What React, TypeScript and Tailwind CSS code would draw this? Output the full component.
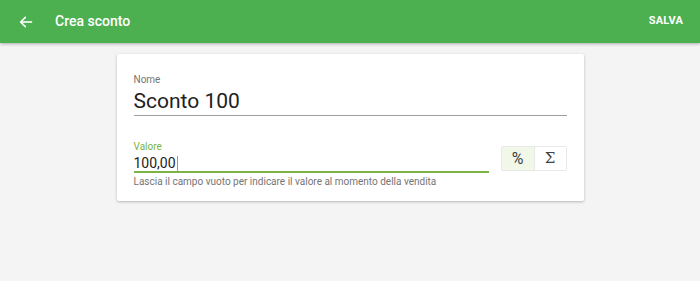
import React from "react";

export default function App() {
  return (
    <div className="w-[700px] h-[281px] bg-[#f4f4f4] flex flex-col" style={{ fontFamily: "Roboto, 'Noto Sans', sans-serif" }}>
      <header className="h-[43px] bg-[#4caf50] flex items-center shadow-[0_1px_3px_rgba(0,0,0,0.3)] relative z-10 shrink-0">
        <div className="w-[50px] flex items-center justify-center pl-[2px]">
          <svg width="16" height="16" viewBox="0 0 24 24" fill="none" stroke="white" strokeWidth="2.4" strokeLinecap="square">
            <path d="M20 12H5" />
            <path d="M11 5l-7 7 7 7" strokeLinecap="round" strokeLinejoin="round" />
          </svg>
        </div>
        <div className="text-white text-[14px] font-medium ml-[5px] flex-1">Crea sconto</div>
        <div className="text-white text-[11px] font-bold tracking-[0.2px] mr-[17px]">SALVA</div>
      </header>
      <main className="flex justify-center pt-[11px]">
        <div className="w-[467px] bg-white shadow-[0_1px_3px_rgba(0,0,0,0.25)] rounded-[2px] px-[17px] pt-[20px] pb-[13px]">
          <div className="text-[10px] text-[#757575] leading-[12px]">Nome</div>
          <div className="mt-[2px] h-[28px] border-b border-[#9e9e9e] flex items-center text-[21px] text-[#212121] leading-none pb-[1px]">Sconto 100</div>
          <div className="flex items-start mt-[25px]">
            <div className="flex-1">
              <div className="text-[10px] text-[#7cb342] leading-[12px]">Valore</div>
              <div className="h-[20px] border-b-[2px] border-[#7cb342] flex items-center text-[14px] text-[#212121] pt-[3px] mr-[0px]">
                100,00<span className="inline-block w-[1px] h-[15px] bg-[#7cb342] ml-[1px]" />
              </div>
              <div className="text-[10px] text-[#757575] mt-[3px] leading-[12px]">Lascia il campo vuoto per indicare il valore al momento della vendita</div>
            </div>
            <div className="ml-[12px] mt-[5px] flex border border-[#e8e8e8] rounded-[2px]">
              <div className="w-[33px] h-[23px] bg-[#f1f8e9] flex items-center justify-center text-[16px] text-[#424242] border-r border-[#e8e8e8]">%</div>
              <div className="w-[31px] h-[23px] bg-white flex items-center justify-center text-[15px] text-[#424242]" style={{ fontFamily: "'DejaVu Serif', serif" }}>Σ</div>
            </div>
          </div>
        </div>
      </main>
    </div>
  );
}
